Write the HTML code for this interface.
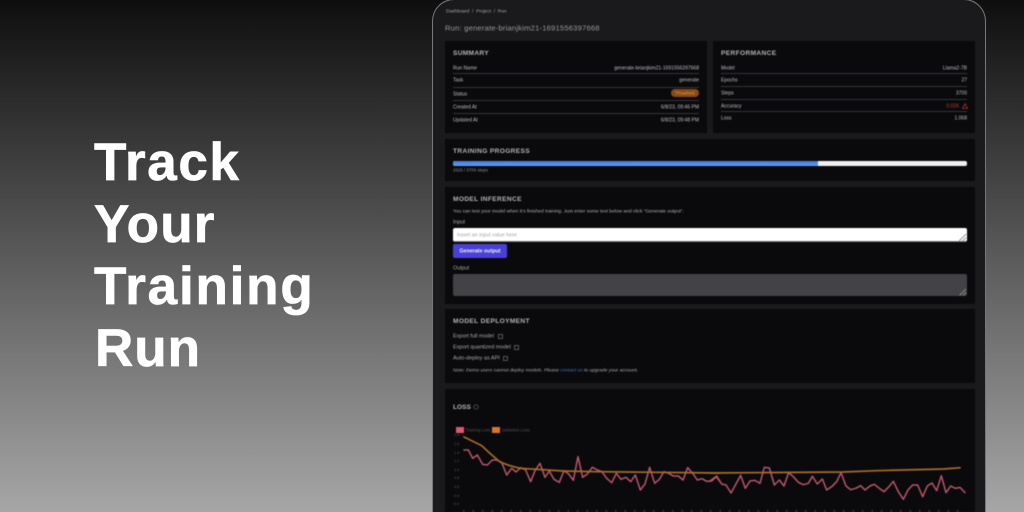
<!DOCTYPE html>
<html>
<head>
<meta charset="utf-8">
<style>
html,body{margin:0;padding:0;width:1024px;height:512px;overflow:hidden}
body{background:#000;font-family:"Liberation Sans",sans-serif}
#clip{position:absolute;left:0;top:0;width:1024px;height:512px;overflow:hidden;background:linear-gradient(180deg,#0e0e0e 0%,#a6a6a6 100%)}
.h{position:absolute;left:94px;color:#fff;font-weight:700;font-size:53px;line-height:62px;white-space:nowrap;-webkit-text-stroke:.7px #fff}
#dev{position:absolute;left:432px;top:-1px;width:552px;height:511.5px;background:#1a1a1c;border:1.5px solid #777;border-bottom:0;border-radius:22px 22px 0 0}
#scr{position:absolute;left:0;top:0;width:1024px;height:512px;overflow:hidden;filter:blur(.45px)}
.p{position:absolute;background:#0a0a0d}
.t{position:absolute;white-space:nowrap;font-size:5px;line-height:6px;color:#bcbcbc;transform:translateY(.5px)}
.r{text-align:right}
.hd{position:absolute;white-space:nowrap;font-size:6.6px;line-height:8px;font-weight:700;letter-spacing:.35px;color:#b4b4b4;transform:translateY(.8px)}
.d{position:absolute;height:1px;background:#33333a}
.cb{position:absolute;width:3px;height:3px;border:.7px solid #555}
.y{position:absolute;white-space:nowrap;left:454px;font-size:3.8px;line-height:4px;color:#555}
</style>
</head>
<body>
<div id="clip">
<div class="h" style="top:132px;letter-spacing:1.6px">Track</div>
<div class="h" style="top:194px;letter-spacing:1.2px">Your</div>
<div class="h" style="top:255.500px;letter-spacing:1.8px">Training</div>
<div class="h" style="top:317.500px;left:95px;letter-spacing:1px">Run</div>

<div id="dev"></div>
<div id="scr">
  <div class="t" style="left:446px;top:8.500px;color:#a5a5a5;font-size:4.800px">Dashboard&nbsp; /&nbsp; Project&nbsp; /&nbsp; Run</div>
  <div class="t" style="left:445px;top:23px;font-size:7.600px;line-height:10px;letter-spacing:.2px;color:#9a9a9a">Run: generate-brianjkim21-1691556397668</div>

  <div class="p" style="left:445px;top:41px;width:262px;height:92px"></div>
  <div class="hd" style="left:453px;top:49px;letter-spacing:.3px">SUMMARY</div>
  <div class="t" style="left:453px;top:65px">Run Name</div>
  <div class="t r" style="right:325px;top:65px">generate-brianjkim21-1691556397668</div>
  <div class="d" style="left:453px;top:73px;width:246px"></div>
  <div class="t" style="left:453px;top:77px">Task</div>
  <div class="t r" style="right:325px;top:77px">generate</div>
  <div class="d" style="left:453px;top:87px;width:246px"></div>
  <div class="t" style="left:453px;top:91px">Status</div>
  <div style="position:absolute;left:671px;top:89px;width:28px;height:8px;border-radius:4px;background:#8a4a16"></div>
  <div class="t" style="left:675px;top:90px;font-size:4.600px;color:#e09a50">Thrashed</div>
  <div class="d" style="left:453px;top:100px;width:246px"></div>
  <div class="t" style="left:453px;top:104px">Created At</div>
  <div class="t r" style="right:325px;top:104px">6/8/23, 09:46 PM</div>
  <div class="d" style="left:453px;top:113px;width:246px"></div>
  <div class="t" style="left:453px;top:116.500px">Updated At</div>
  <div class="t r" style="right:325px;top:116.500px">6/8/23, 09:48 PM</div>

  <div class="p" style="left:713px;top:41px;width:262px;height:92px"></div>
  <div class="hd" style="left:721px;top:49px">PERFORMANCE</div>
  <div class="t" style="left:721px;top:65px">Model</div>
  <div class="t r" style="right:57px;top:65px">Llama2-7B</div>
  <div class="d" style="left:721px;top:73px;width:246px"></div>
  <div class="t" style="left:721px;top:77px">Epochs</div>
  <div class="t r" style="right:57px;top:77px">27</div>
  <div class="d" style="left:721px;top:86px;width:246px"></div>
  <div class="t" style="left:721px;top:90px">Steps</div>
  <div class="t r" style="right:57px;top:90px">3700</div>
  <div class="d" style="left:721px;top:99px;width:246px"></div>
  <div class="t" style="left:721px;top:102.500px">Accuracy</div>
  <div class="t r" style="right:65px;top:102.500px;color:#c03838">0.026</div>
  <svg style="position:absolute;left:962px;top:102.500px" width="6" height="6" viewBox="0 0 6 6"><path d="M3 .7 5.500 5.300H.5Z" fill="none" stroke="#c03838" stroke-width=".7"/></svg>
  <div class="d" style="left:721px;top:111px;width:246px"></div>
  <div class="t" style="left:721px;top:115px">Loss</div>
  <div class="t r" style="right:57px;top:115px">1.068</div>

  <div class="p" style="left:445px;top:139px;width:530px;height:42px"></div>
  <div class="hd" style="left:453px;top:147px">TRAINING PROGRESS</div>
  <div style="position:absolute;left:453px;top:161px;width:514px;height:5px;border-radius:2px;background:#f0f0f0;overflow:hidden"><div style="width:365px;height:5px;background:linear-gradient(180deg,#4478dc,#6a9cf2)"></div></div>
  <div class="t" style="left:453px;top:167px;font-size:4.400px;color:#8c8c8c">2625 / 3700 steps</div>

  <div class="p" style="left:445px;top:187px;width:530px;height:117px"></div>
  <div class="hd" style="left:453px;top:195px">MODEL INFERENCE</div>
  <div class="t" style="left:453px;top:208.500px;font-size:4.900px;color:#b0b0b0">You can test your model when it's finished training. Just enter some text below and click "Generate output".</div>
  <div class="t" style="left:453px;top:218.500px;color:#a8a8a8;font-size:5.400px">Input</div>
  <div style="position:absolute;left:453px;top:228px;width:514px;height:14px;border-radius:2px;background:#fff;border-bottom:1px solid #777;box-sizing:border-box"></div>
  <div class="t" style="left:457px;top:232px;font-size:5.300px;color:#a6a6a6">Insert an input value here</div>
  <svg style="position:absolute;left:957px;top:232px" width="10" height="10" viewBox="0 0 10 10"><path d="M2 9 9 2M5.500 9 9 5.500" stroke="#777" stroke-width=".8"/></svg>
  <div style="position:absolute;left:453px;top:244px;width:54px;height:14px;border-radius:2px;background:#4a40d8"></div>
  <div class="t" style="left:453px;top:248px;width:54px;text-align:center;font-size:5.300px;font-weight:700;color:#f2f2fa">Generate output</div>
  <div class="t" style="left:453px;top:265px;color:#a8a8a8;font-size:5.400px">Output</div>
  <div style="position:absolute;left:453px;top:274px;width:514px;height:22px;border-radius:2px;background:#424247"></div>
  <svg style="position:absolute;left:958px;top:287px" width="9" height="9" viewBox="0 0 9 9"><path d="M1.500 8.500 8 2M5 8.500 8 5.500" stroke="#9a9a9a" stroke-width=".8"/></svg>

  <div class="p" style="left:445px;top:309px;width:530px;height:74px"></div>
  <div class="hd" style="left:453px;top:317px">MODEL DEPLOYMENT</div>
  <div class="t" style="left:453px;top:333px;font-size:5.500px;color:#a8a8a8">Export full model</div>
  <div class="cb" style="left:498px;top:334px"></div>
  <div class="t" style="left:453px;top:344px;font-size:5.500px;color:#a8a8a8">Export quantized model</div>
  <div class="cb" style="left:514px;top:345px"></div>
  <div class="t" style="left:453px;top:355px;font-size:5.500px;color:#a8a8a8">Auto-deploy as API</div>
  <div class="cb" style="left:503px;top:356px"></div>
  <div class="t" style="left:453px;top:368px;font-style:italic;font-size:4.900px;color:#a8a8a8">Note: Demo users cannot deploy models. Please <span style="color:#3f6fd0">contact us</span> to upgrade your account.</div>

  <div class="p" style="left:445px;top:389px;width:530px;height:123px"></div>
  <div class="hd" style="left:453px;top:403px;letter-spacing:0">LOSS</div>
  <svg style="position:absolute;left:473px;top:404px" width="6" height="6" viewBox="0 0 6 6"><circle cx="3" cy="3" r="2.200" fill="none" stroke="#666" stroke-width=".7"/></svg>

  <div style="position:absolute;left:456px;top:427px;width:8px;height:5.500px;background:#e0566e"></div>
  <div class="t" style="left:465.500px;top:427px;font-size:4.200px;color:#505050">Training Loss</div>
  <div style="position:absolute;left:492px;top:427px;width:7.500px;height:5.500px;background:#d8772c"></div>
  <div class="t" style="left:501.500px;top:427px;font-size:4.200px;color:#505050">Validation Loss</div>

  <div class="y" style="top:433px">1.8</div>
  <div class="y" style="top:442px">1.6</div>
  <div class="y" style="top:450.500px">1.4</div>
  <div class="y" style="top:459px">1.2</div>
  <div class="y" style="top:468px">1.0</div>
  <div class="y" style="top:476px">0.8</div>
  <div class="y" style="top:485px">0.6</div>
  <div class="y" style="top:494px">0.4</div>
  <div class="y" style="top:502px">0.2</div>

  <svg style="position:absolute;left:0;top:0;display:block" width="1024" height="512" viewBox="0 0 1024 512">
    <line x1="463" y1="511" x2="966" y2="511" stroke="#444" stroke-width="1.500" stroke-dasharray="1.500 8"/>
    <g transform="translate(430 400) scale(.33333)" fill="none" stroke-linejoin="round">
      <polyline stroke="#b85566" stroke-width="4.500" points="100,150 115,150 128,175 142,165 158,193 172,195 187,180 200,180 215,187 230,225 245,205 258,216 272,203 287,210 302,245 315,212 330,190 345,232 358,213 372,238 388,247 402,212 416,222 430,241 444,170 458,232 472,222 487,202 502,210 516,215 530,235 545,248 559,220 573,238 588,232 602,245 616,225 631,270 645,252 659,202 674,250 688,238 702,215 716,220 730,228 745,228 759,240 773,203 788,220 802,240 816,236 830,244 845,243 859,230 870,245"/>
      <polyline stroke="#a86a2a" stroke-width="5" points="100,110 155,137 180,160 210,186 240,197 270,205 320,208 400,213 500,215 870,219"/>
    </g>
    <g transform="translate(710 400) scale(.33333)" fill="none" stroke-linejoin="round">
      <polyline stroke="#b85566" stroke-width="4.500" points="0,243 20,228 35,252 48,255 63,279 92,226 106,265 120,243 135,241 150,250 163,202 178,204 193,255 208,240 222,258 236,218 250,230 265,247 280,254 295,250 307,229 322,252 337,237 350,270 365,260 380,245 393,218 408,258 422,269 437,265 452,257 465,270 480,258 493,253 508,265 522,275 537,260 550,244 565,275 580,298 594,270 608,255 623,255 638,290 652,258 666,249 680,272 694,227 708,278 722,258 736,265 750,262 766,279"/>
      <polyline stroke="#a86a2a" stroke-width="5" points="0,219 400,216 500,212 700,207 752,203"/>
    </g>
  </svg>
</div>
</div>
</body>
</html>
